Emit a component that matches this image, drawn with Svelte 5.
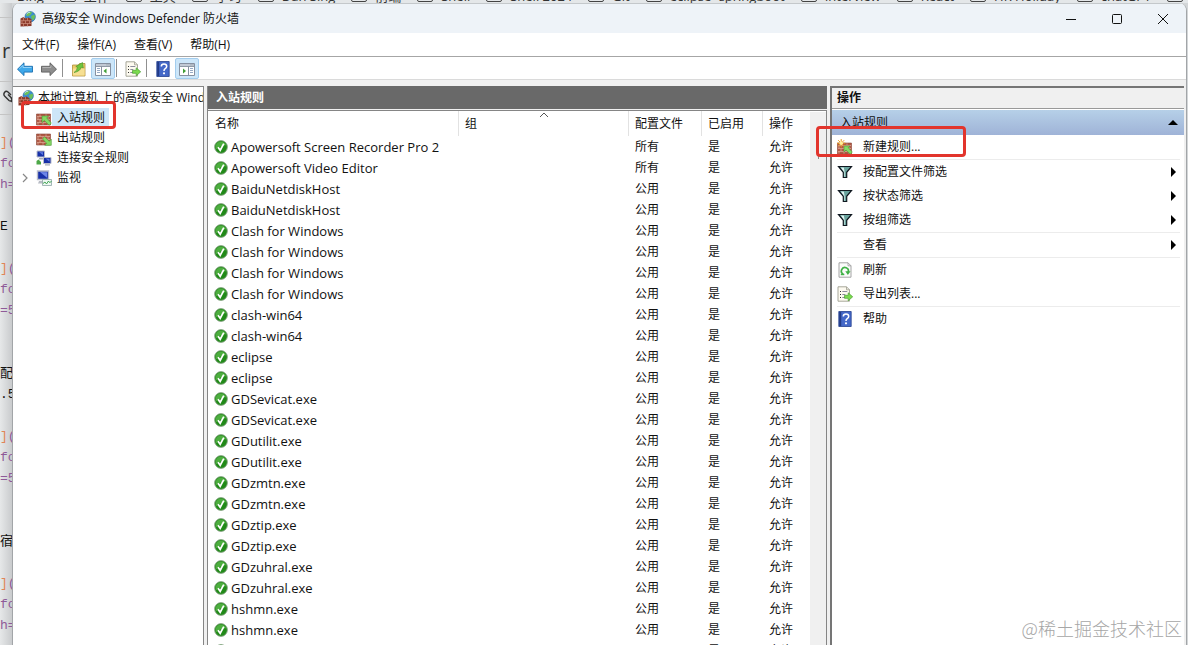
<script>
  const bookmarks = ['工作', '工具', '学习', 'Dan Sing', '前端', 'Shell', 'Shell 2024', 'Git', 'eclipse+springboot', 'Interview', 'React', 'HR Holiday', 'chatGPT', ''];
  const code = [
    ['](', 'b'], ['fo', 'p'], ['h=', 'p'], ['', ''], ['E :', 'k'], ['', ''],
    ['](', 'b'], ['fo', 'p'], ['=5', 'p'], ['', ''], ['', ''], ['配', 'k'], ['.5', 'k'], ['', ''],
    ['](', 'b'], ['fo', 'p'], ['=5', 'p'], ['', ''], ['', ''], ['宿', 'k'], ['', ''],
    ['](', 'b'], ['fo', 'p'], ['h=', 'p']
  ];
  const menus = ['文件(F)', '操作(A)', '查看(V)', '帮助(H)'];
  const names = [
    'Apowersoft Screen Recorder Pro 2', 'Apowersoft Video Editor', 'BaiduNetdiskHost', 'BaiduNetdiskHost',
    'Clash for Windows', 'Clash for Windows', 'Clash for Windows', 'Clash for Windows',
    'clash-win64', 'clash-win64', 'eclipse', 'eclipse', 'GDSevicat.exe', 'GDSevicat.exe',
    'GDutilit.exe', 'GDutilit.exe', 'GDzmtn.exe', 'GDzmtn.exe', 'GDztip.exe', 'GDztip.exe',
    'GDzuhral.exe', 'GDzuhral.exe', 'hshmn.exe', 'hshmn.exe', 'hshmn.exe'
  ];
  const rules = names.map((name, i) => ({ name, profile: i < 2 ? '所有' : '公用' }));
  const tree = [
    { icon: 'in', label: '入站规则', selected: true },
    { icon: 'out', label: '出站规则' },
    { icon: 'link', label: '连接安全规则' },
    { icon: 'monitor', label: '监视', expandable: true }
  ];
  const actions = [
    [{ icon: 'new', label: '新建规则...' }],
    [
      { icon: 'filter', label: '按配置文件筛选', more: true },
      { icon: 'filter', label: '按状态筛选', more: true },
      { icon: 'filter', label: '按组筛选', more: true }
    ],
    [{ icon: '', label: '查看', more: true }],
    [{ icon: 'refresh', label: '刷新' }, { icon: 'export', label: '导出列表...' }],
    [{ icon: 'help', label: '帮助' }]
  ];
</script>

{#snippet bricks()}
  <rect x="0.5" y="4" width="14" height="11" fill="#b05a45" />
  <path d="M0.5 6.5h14M0.5 9.5h14M0.5 12.5h14M4 4v2.5M10 4v2.5M2 6.5v3M7 6.5v3M12 6.5v3M4 9.5v3M10 9.5v3M2 12.5V15M7 12.5V15M12 12.5V15" stroke="#dba592" stroke-width="0.8" fill="none" />
  <path d="M0.5 4h14v11H.5z" fill="none" stroke="#8a4535" stroke-width="0.6" />
{/snippet}

{#snippet icon(kind)}
  <svg class="ico" viewBox="0 0 16 16" aria-hidden="true">
    {#if kind === 'firewall'}
      <circle cx="10.2" cy="5.7" r="5.2" fill="#3b8fd0" stroke="#28659c" stroke-width="0.6" />
      <path d="M7 2q3-2 5-.7l-1 2.2-3 1.7-1.800-.6zM11 5l3.500-1.500.6 2.300-1.300 3.200-2-.6z" fill="#6cc05a" />
      <path d="M6.500 3q1.500-1.800 3.600-1.800" stroke="#c8ecff" fill="none" stroke-width="0.9" />
      <path d="M.5 7.500l3-1.500 2 1.500 3-1 3 1.800V15l-11 .5z" fill="#8d3a2b" />
      <path d="M.5 9.700h11M.5 12.500h11M3.500 6.500v3M7.500 7v2.700M2 9.700v2.800M5.500 9.700v2.800M9.500 9.700v2.800M3.500 12.500v3M7.500 12.500v3" stroke="#d0907e" stroke-width="0.7" />
    {:else if kind === 'in'}
      {@render bricks()}
      <path d="M6 6h6.500L10.700 8l4.600 5-2 2.300L8.300 10.500 6 12.600z" fill="#84d964" stroke="#4c9a38" stroke-width="0.6" />
    {:else if kind === 'out'}
      {@render bricks()}
      <path d="M15.300 15.300H8.800l1.900-2L6.500 9l2-2.200 4.800 4.500 2-2z" fill="#84d964" stroke="#4c9a38" stroke-width="0.6" />
    {:else if kind === 'new'}
      {@render bricks()}
      <path d="M7 7h6l-1.700 1.700 4 4.300-2 2.200-4.300-4.200-2 2z" fill="#84d964" stroke="#4c9a38" stroke-width="0.6" />
      <path d="M4.200 0v8.400M0 4.200h8.400M1.200 1.200l6 6M7.200 1.200l-6 6" stroke="#e89a20" stroke-width="1" />
      <circle cx="4.200" cy="4.200" r="1.700" fill="#fff29a" />
    {:else if kind === 'link'}
      <path d="M1 1h7.500v6H1z" fill="#1730a8" stroke="#b8bccb" />
      <path d="M3 2l4 .2v3z" fill="#5b78e0" />
      <path d="M3 8h4v1.500H3z" fill="#a7acb8" />
      <path d="M7.500 7.500H15v6H7.500z" fill="#1730a8" stroke="#b8bccb" />
      <path d="M9.500 8.500l4 .2v3z" fill="#5b78e0" />
      <path d="M9 14.300h5v1.200H9z" fill="#a7acb8" />
      <path d="M.5 14.500V11l2-1.500L5 12v2.500z" fill="#4da848" />
    {:else if kind === 'monitor'}
      <path d="M1.500 1h11v8.500h-11z" fill="#1730a8" stroke="#b8bccb" stroke-width="1.400" />
      <path d="M4 2l7 .3v5.500z" fill="#6d86e8" />
      <path d="M3 11h7v2.500H2z" fill="#b7bbc4" />
      <path d="M6.500 9.500h9v6h-9z" fill="#eef7f2" stroke="#8fa6a6" stroke-width="0.8" />
      <path d="M7 13.500l2-1.500 1.500 2 2-3 1 1.500 2-1" fill="none" stroke="#36a04a" stroke-width="0.9" />
    {:else if kind === 'filter'}
      <path d="M1.500 2.500h13L9.700 8.300v5.200H6.300V8.300z" fill="#69a39d" stroke="#101820" stroke-width="1.200" />
      <path d="M3.800 3.500h3l.8 4.300v5h-.6V8z" fill="#dff3f1" />
    {:else if kind === 'refresh'}
      <path d="M2 .8h9l3 3v11.400H2z" fill="#fbfbfb" stroke="#9a9a9a" stroke-width="0.9" />
      <path d="M11 .8v3h3" fill="none" stroke="#9a9a9a" stroke-width="0.8" />
      <path d="M6.300 12.200a3.500 3.500 0 1 1 4.900-2" fill="none" stroke="#3fb045" stroke-width="1.700" />
      <path d="M8.300 9.300h5.200l-2.600 3.700z" fill="#3fb045" />
      <path d="M3.800 12.500h3.500" stroke="#3fb045" stroke-width="1.400" />
    {:else if kind === 'export'}
      <path d="M1 .8h8.500l3 3v11.400H1z" fill="#fdfaf0" stroke="#9d9d8e" stroke-width="0.9" />
      <path d="M9.500 .8v3h3" fill="none" stroke="#9d9d8e" stroke-width="0.8" />
      <path d="M3 5.500h1M3 8.500h1M3 11.500h1" stroke="#333" stroke-width="1.100" />
      <path d="M5.300 5.500h5M5.300 8.500h3M5.300 11.500h3" stroke="#8c8c9c" stroke-width="1" />
      <path d="M7.500 9.300h3.700V6.800l4.500 4-4.500 4v-2.500H7.500z" fill="#7bdb4e" stroke="#4a9e33" stroke-width="0.7" />
    {:else if kind === 'help'}
      <path d="M1.800 .5h12.400v15H1.800z" fill="#4468c8" stroke="#24408e" stroke-width="0.8" />
      <path d="M2.200 1h2v14h-2z" fill="#223a86" />
      <path d="M6.300 5.500q0-2.500 2.700-2.500t2.700 2.300q0 1.400-1.500 2.300-1.200.8-1.200 2.300" fill="none" stroke="#fff" stroke-width="1.500" />
      <circle cx="9" cy="12.300" r="1.100" fill="#fff" />
    {:else if kind === 'back'}
      <path d="M.5 8.200L7 1.800v3.500h8.500v5.800H7v3.500z" fill="#3ea8ea" stroke="#1c6fb0" stroke-width="0.9" />
      <path d="M2.500 7.800L6 4.300v2.200h8.500" fill="none" stroke="#a5dcfb" stroke-width="0.8" />
    {:else if kind === 'forward'}
      <path d="M15.500 8.200L9 1.800v3.500H.5v5.800H9v3.500z" fill="#8d8d8d" stroke="#5d5d5d" stroke-width="0.9" />
      <path d="M1.500 6.500H9.900V4.300" fill="none" stroke="#bcbcbc" stroke-width="0.8" />
    {:else if kind === 'up'}
      <path d="M1.500 4h6l1-1.500H14V15H1.500z" fill="#eccb6a" stroke="#b08f3a" stroke-width="0.8" />
      <path d="M1.900 7.500h11.700v7.100H1.900z" fill="#f6df92" />
      <path d="M3 11.500q3-1.500 3.500-5.500L4.800 5.500 11.500 1.500l.8 5.500-2-.8Q9 10.500 3 11.500z" fill="#6fc63d" stroke="#44902a" stroke-width="0.6" />
    {:else if kind === 'pane-left' || kind === 'pane-right'}
      <path d="M.5 2.500h15v12H.5z" fill="#fff" stroke="#8690a0" />
      <path d="M1 3h14v2H1z" fill="#c2c9d4" />
      <path d="M1 5.500h14M11.500 3.900h1M13.500 3.900h1" stroke="#74808f" stroke-width="0.8" />
      {#if kind === 'pane-left'}
        <path d="M6.500 5.500v9" stroke="#8690a0" />
        <path d="M2 7.500h3M2 9.500h3M2 11.500h3" stroke="#8aa0be" stroke-width="0.9" />
        <path d="M11.500 7.500v5L8.500 10z" fill="#3f9e35" />
      {:else}
        <path d="M9.500 5.500v9" stroke="#8690a0" />
        <path d="M11 7.500h3M11 9.500h3M11 11.500h3" stroke="#8aa0be" stroke-width="0.9" />
        <path d="M4 7.500v5L7 10z" fill="#3f9e35" />
      {/if}
    {:else if kind === 'ok'}
      <circle cx="8" cy="8" r="7.300" fill="#218a18" stroke="#8aa588" stroke-width="1" />
      <path d="M1.800 8A6.200 6.200 0 0 1 13.800 6Q8 6 2.500 10.500z" fill="#4dae3f" />
      <path d="M4.600 8.200l2.500 3.500L11.200 4.200" fill="none" stroke="#fff" stroke-width="2" />
    {/if}
  </svg>
{/snippet}

<div class="desktop">
  <div class="bookmarks">
    <span class="bm">Bing</span>
    {#each bookmarks as b}
      <span class="bm"><i class="folder"></i>{b}</span>
    {/each}
  </div>
  <div class="stage">
    <div class="gutter">
      <div class="editor-head">r</div>
      <div class="editor-tool">
        <svg class="clip" viewBox="0 0 16 16" aria-hidden="true"><path d="M10 6L7 3Q5 1.500 3.500 3.500T4 7.500l4 4q1.500 1 2.500 0T10 8.500L7 5.500M10 12l3 2" fill="none" stroke="#333" stroke-width="1.400" /></svg>
      </div>
      {#each code as [text, tone]}
        <div class="code {tone}">{#if tone === 'b'}<span>]</span>({:else}{text}{/if}</div>
      {/each}
    </div>

    <main class="window">
      <header class="titlebar">
        {@render icon('firewall')}
        <h1>高级安全 Windows Defender 防火墙</h1>
        <button class="cap" aria-label="最小化"><svg viewBox="0 0 12 12"><path d="M1 6.500h10" /></svg></button>
        <button class="cap" aria-label="最大化"><svg viewBox="0 0 12 12"><rect x="1.500" y="1.500" width="9" height="9" rx="1" /></svg></button>
        <button class="cap" aria-label="关闭"><svg viewBox="0 0 12 12"><path d="M1 1l10 10M11 1L1 11" /></svg></button>
      </header>

      <nav class="menubar">
        {#each menus as m}<button>{m}</button>{/each}
      </nav>

      <div class="toolbar">
        <button aria-label="后退">{@render icon('back')}</button>
        <button aria-label="前进">{@render icon('forward')}</button>
        <i class="sep"></i>
        <button aria-label="上一级">{@render icon('up')}</button>
        <button class="on" aria-label="显示控制台树">{@render icon('pane-left')}</button>
        <i class="sep"></i>
        <button aria-label="导出列表">{@render icon('export')}</button>
        <i class="sep"></i>
        <button aria-label="帮助">{@render icon('help')}</button>
        <button class="on" aria-label="显示操作窗格">{@render icon('pane-right')}</button>
      </div>

      <div class="panes">
        <aside class="tree">
          <button class="root">{@render icon('firewall')}<span>本地计算机 上的高级安全 Wind</span></button>
          <ul>
            {#each tree as node}
              <li>
                <span class="twist">
                  {#if node.expandable}<svg viewBox="0 0 8 10"><path d="M2 1l4 4-4 4" /></svg>{/if}
                </span>
                <button class:selected={node.selected}>{@render icon(node.icon)}<span>{node.label}</span></button>
              </li>
            {/each}
          </ul>
          <div class="mark mark-tree"></div>
        </aside>

        <section class="rules">
          <h2>入站规则</h2>
          <div class="list">
            <div class="scroll">
              <table>
                <colgroup><col class="c-name" /><col /><col class="c-profile" /><col class="c-on" /><col class="c-act" /></colgroup>
                <thead>
                  <tr>
                    <th>名称</th>
                    <th class="sorted">组<svg viewBox="0 0 10 6"><path d="M1 5l4-4 4 4" /></svg></th>
                    <th>配置文件</th><th>已启用</th><th>操作</th>
                  </tr>
                </thead>
                <tbody>
                  {#each rules as r}
                    <tr>
                      <td><div class="name">{@render icon('ok')}<span>{r.name}</span></div></td>
                      <td></td><td>{r.profile}</td><td>是</td><td>允许</td>
                    </tr>
                  {/each}
                </tbody>
              </table>
            </div>
            <div class="track"><i></i></div>
          </div>
        </section>

        <aside class="actions">
          <h2>操作</h2>
          <button class="group"><span>入站规则</span><i class="tri-up"></i></button>
          {#each actions as group}
            <div class="block">
              {#each group as a}
                <button class="act">
                  <span class="slot">{#if a.icon}{@render icon(a.icon)}{/if}</span>
                  <span class="lbl">{a.label}</span>
                  {#if a.more}<i class="tri"></i>{/if}
                </button>
              {/each}
            </div>
          {/each}
          <div class="mark mark-action"></div>
          <div class="watermark">@稀土掘金技术社区</div>
        </aside>
      </div>
    </main>
  </div>
</div>

<style>
  :global(body) { margin: 0; }
  .desktop {
    height: 100vh; overflow: hidden; display: flex; flex-direction: column;
    background: #d3d6d8; color: #111;
    font: 12px/16px "Open Sans", "Noto Sans CJK SC", sans-serif;
  }
  .desktop * { box-sizing: border-box; }
  button {
    border: 0; margin: 0; padding: 0; background: none; font: inherit; color: inherit;
    display: flex; align-items: center; text-align: left; white-space: nowrap;
  }
  h1, h2 { margin: 0; font-size: 12px; }
  h1 { font-weight: 400; }
  ul { list-style: none; margin: 0; padding: 0; }
  svg { display: block; flex: none; }
  .ico { width: 16px; height: 16px; }

  .bookmarks {
    flex: none; height: 3px; overflow: hidden; display: flex; align-items: flex-end; gap: 16px;
    padding-left: 17px; font-size: 13px; color: #333; background: #e4e7e9;
  }
  .bm { flex: none; display: flex; gap: 8px; height: 15px; line-height: 16px; white-space: nowrap; }
  .folder { width: 16px; height: 14px; border: 1px solid #444; border-radius: 2px; }

  .stage { flex: 1; min-height: 0; display: flex; padding-right: 1px; }
  .gutter {
    width: 12px; flex: none; overflow: hidden; white-space: nowrap;
    background: linear-gradient(90deg, #e6e8e9, #c9cbcd);
    font: 13px/21px "Liberation Mono", "Noto Sans CJK SC", monospace;
  }
  .editor-head {
    height: 79px; padding: 36px 0 0 2px;
    border-bottom: 1px solid #c4c4c4; font: 20px/24px "Open Sans", sans-serif; color: #333;
    background: linear-gradient(#c4c4c4, #c4c4c4) 0 14px / 100% 1px no-repeat;
  }
  .editor-tool { height: 33px; border-bottom: 1px solid #c4c4c4; padding: 7px 0 0 1px; margin-bottom: 17px; }
  .clip { width: 16px; height: 16px; }
  .code { height: 21px; }
  .code.p, .code.b { color: #8f5a98; }
  .code.b span { color: #e08558; }

  .window {
    flex: 1; min-width: 0; display: flex; flex-direction: column; overflow: hidden;
    border: 1px solid #a2a5a8; border-width: 0 1px; border-radius: 8px 8px 0 0; background: #f0f0f0;
  }
  .titlebar { height: 30px; flex: none; display: flex; align-items: center; padding-left: 7px; background: #eef3f8; border-top: 1px solid #c4c8cb; }
  .titlebar h1 { flex: 1; padding-left: 6px; }
  .cap { width: 46px; height: 28px; justify-content: center; }
  .cap svg { width: 12px; height: 12px; fill: none; stroke: #111; stroke-width: 1; }

  .menubar { height: 24px; flex: none; display: flex; background: #fff; border-bottom: 1px solid #a6a6a6; }
  .menubar button { padding: 0 9px; }

  .toolbar {
    height: 23px; flex: none; display: flex; align-items: flex-end; background: #fff;
    border-bottom: 1px solid #dadada;
  }
  .toolbar button { width: 24px; height: 21px; justify-content: center; }
  .toolbar .on { background: #cce6f9; border: 1px solid #a3cdee; border-radius: 2px; }
  .sep { width: 1px; height: 18px; margin: 0 4px 2px 1px; background: #909090; }

  .panes { flex: 1; min-height: 0; display: flex; gap: 3px; padding: 6px 2px 0 0; }

  .tree { position: relative; width: 191px; flex: none; background: #fff; border: 1px solid #858585; border-width: 1px 1px 0 0; padding-top: 1px; }
  .root { height: 20px; width: 100%; padding-left: 5px; gap: 4px; overflow: hidden; }
  .root span { flex: 1; min-width: 0; overflow: hidden; }
  .tree li { height: 20px; display: flex; align-items: center; }
  .tree li button { height: 20px; gap: 5px; padding-right: 4px; }
  .tree .selected { background: linear-gradient(#cde6f8, #cde6f8) 16px 0 no-repeat; }
  .twist { width: 23px; display: flex; justify-content: center; }
  .twist svg { width: 8px; height: 10px; fill: none; stroke: #888; stroke-width: 1.2; }

  .mark { position: absolute; border: 3px solid #e2342c; border-radius: 4px; pointer-events: none; }
  .mark-tree { left: 8px; top: 14px; width: 95px; height: 28px; }
  .mark-action { left: -16px; top: 38px; width: 150px; height: 31px; }

  .rules { flex: 1; min-width: 0; display: flex; flex-direction: column; border-left: 1px solid #858585; }
  .rules h2 { height: 23px; flex: none; padding-left: 8px; line-height: 23px; background: #696969; color: #fff; }
  .list {
    flex: 1; min-height: 0; display: flex; margin-top: 1px; background: #fff;
    border: 1px solid #858585; border-width: 1px 1px 0 0;
  }
  .scroll { flex: 1; min-width: 0; overflow: hidden; }
  .track { width: 16px; margin-top: 1px; background: #f0f0f0; display: flex; justify-content: center; }
  .track i { width: 1px; height: 12px; margin-top: 35px; background: #8a8a8a; }

  table { width: 100%; table-layout: fixed; border-collapse: collapse; }
  .c-name { width: 251px; }
  .c-profile { width: 73px; }
  .c-on { width: 61px; }
  .c-act { width: 47px; }
  th { height: 25px; padding: 0 0 0 6px; font-weight: 400; text-align: left; background: linear-gradient(#e2e2e2, #e2e2e2) 100% 0 / 1px 100% no-repeat; }
  th:last-child { background: none; }
  th:first-child { padding-left: 7px; }
  .sorted { position: relative; }
  .sorted svg { position: absolute; top: 1px; left: calc(50% - 5px); width: 10px; height: 6px; fill: none; stroke: #555; }
  td { height: 21px; padding: 0 0 0 6px; white-space: nowrap; }
  .name { display: flex; align-items: center; gap: 3px; font-size: 13px; }
  .name .ico { width: 14px; height: 14px; }

  .actions { position: relative; width: 354px; flex: none; background: #fff; border: 2px solid #757575; border-width: 2px 0 0 2px; }
  .actions h2 { height: 21px; padding-left: 5px; line-height: 20px; background: #f0f0f0; border-bottom: 1px solid #999; }
  .group {
    width: 100%; height: 25px; margin-top: 1px; padding: 0 6px 0 8px; justify-content: space-between;
    background: linear-gradient(#b6d0e8, #9fb3d7);
  }
  .tri-up { border: 5px solid transparent; border-top: 0; border-bottom-color: #000; }
  .block { margin: 0 4px 0 5px; border-bottom: 1px solid #ececec; }
  .block:nth-last-child(3) { border-bottom: 0; }
  .act { width: 100%; height: 24px; padding-right: 4px; }
  .slot { width: 26px; flex: none; }
  .lbl { flex: 1; }
  .tri { border: 5px solid transparent; border-right: 0; border-left-color: #000; }

  .watermark {
    position: absolute; right: 2px; bottom: 5px; font: 18px/24px "Noto Sans CJK SC", sans-serif;
    font-weight: 300; color: #a6a6a6; white-space: nowrap;
  }
</style>
